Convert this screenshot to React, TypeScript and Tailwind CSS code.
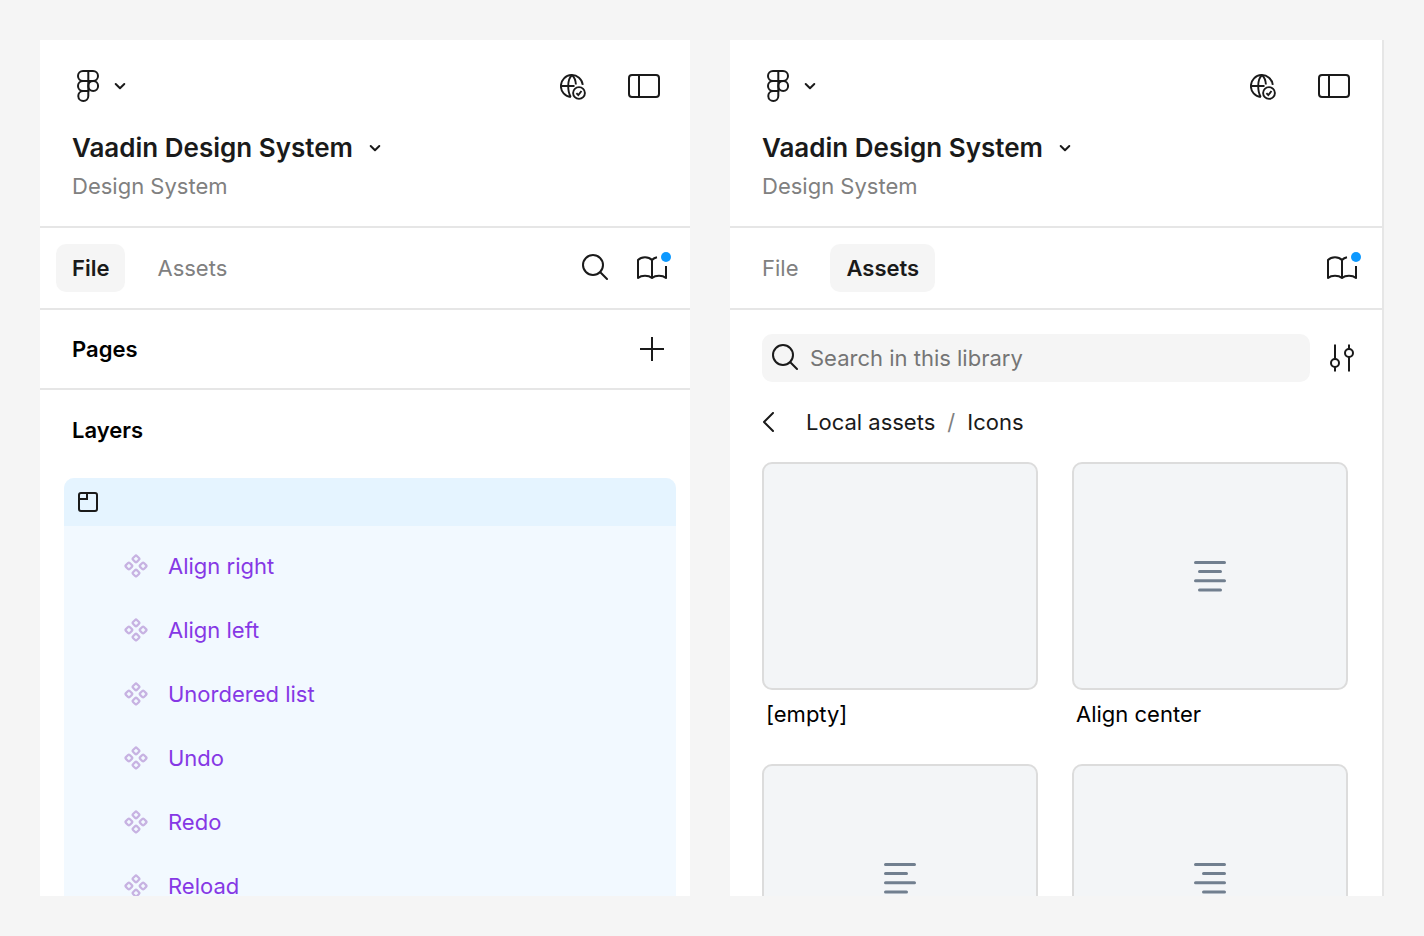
import React, { type ReactNode } from "react";

type IconProps = { className?: string };

function LogoIcon() {
  return (
    <svg width="32" height="32" viewBox="0 0 32 32" fill="none" stroke="currentColor" strokeWidth="2" aria-hidden="true">
      <path d="M16.300 1H11a5 5 0 0 0 0 10h5.300V1zM16.300 1h4.700a5 5 0 0 1 0 10h-4.700" />
      <path d="M16.300 11H11a5 5 0 0 0 0 10h5.300V11z" />
      <circle cx="21.200" cy="16" r="4.900" />
      <path d="M16.300 21H11a5 5 0 1 0 5.300 5V21z" />
    </svg>
  );
}

function ChevronDownIcon() {
  return (
    <svg width="12" height="8" viewBox="0 0 12 8" fill="none" stroke="currentColor" strokeWidth="2" strokeLinecap="round" strokeLinejoin="round" aria-hidden="true">
      <path d="M1.700 2 6 6.200 10.300 2" />
    </svg>
  );
}

function GlobeCheckIcon() {
  return (
    <svg width="28" height="28" viewBox="0 0 28 28" fill="none" stroke="currentColor" strokeWidth="1.900" aria-hidden="true">
      <path d="M22.800 12.800A11 11 0 1 0 10.800 25" />
      <path d="M12 3.200C9.200 5.500 8.200 9.500 8.200 14c0 4.300.6 7.800 2.600 11M12 3.200c2.400 2 3.700 5.500 3.900 9.300M1.200 14h13.300" />
      <circle cx="19" cy="21" r="5.900" />
      <path d="m16.400 21.200 1.900 1.900 3.200-4.100" />
    </svg>
  );
}

function SidebarIcon() {
  return (
    <svg width="32" height="24" viewBox="0 0 32 24" fill="none" stroke="currentColor" strokeWidth="2" aria-hidden="true">
      <rect x="1" y="1" width="30" height="22" rx="3" />
      <path d="M11 1v22" />
    </svg>
  );
}

function SearchIcon() {
  return (
    <svg width="28" height="28" viewBox="0 0 28 28" fill="none" stroke="currentColor" strokeWidth="2" strokeLinecap="round" aria-hidden="true">
      <circle cx="13" cy="11" r="10" />
      <path d="m20.300 18.300 6.700 6.700" />
    </svg>
  );
}

function BookIcon() {
  return (
    <svg width="36" height="32" viewBox="0 0 36 32" fill="none" stroke="currentColor" strokeWidth="2" strokeLinejoin="round" aria-hidden="true">
      <path d="M16 8C12.500 4.200 5.500 4.200 2 8v18c3.500-3 10.500-3 14 0 3.500-3 10.500-3 14 0V14M16 8v18M16 8c1.400-1.500 3.100-2.400 5-2.800" />
      <circle cx="30" cy="5" r="5" fill="#0d99ff" stroke="none" />
    </svg>
  );
}

function PlusIcon() {
  return (
    <svg width="24" height="24" viewBox="0 0 24 24" fill="none" stroke="currentColor" strokeWidth="2" aria-hidden="true">
      <path d="M12 0v24M0 12h24" />
    </svg>
  );
}

function FrameIcon() {
  return (
    <svg width="24" height="24" viewBox="0 0 24 24" fill="none" stroke="currentColor" strokeWidth="2" aria-hidden="true">
      <rect x="3" y="3" width="18" height="18" rx="2" />
      <path d="M3 9h8V3" />
    </svg>
  );
}

function ComponentIcon({ className }: IconProps) {
  return (
    <svg className={className} width="24" height="24" viewBox="0 0 24 24" fill="none" stroke="currentColor" strokeWidth="2.200" aria-hidden="true">
      <rect x="-2.700" y="-2.700" width="5.400" height="5.400" rx="1.200" transform="translate(12 4.900) rotate(45)" />
      <rect x="-2.700" y="-2.700" width="5.400" height="5.400" rx="1.200" transform="translate(19.100 12) rotate(45)" />
      <rect x="-2.700" y="-2.700" width="5.400" height="5.400" rx="1.200" transform="translate(12 19.100) rotate(45)" />
      <rect x="-2.700" y="-2.700" width="5.400" height="5.400" rx="1.200" transform="translate(4.900 12) rotate(45)" />
    </svg>
  );
}

function SlidersIcon() {
  return (
    <svg width="24" height="28" viewBox="0 0 24 28" fill="none" stroke="currentColor" strokeWidth="2" aria-hidden="true">
      <circle cx="5" cy="19" r="4" />
      <circle cx="19" cy="9" r="4" />
      <path d="M5 0.500V15M5 23v4.500M19 0.500V5M19 13v14.500" />
    </svg>
  );
}

function BackIcon() {
  return (
    <svg width="14" height="20" viewBox="0 0 14 20" fill="none" stroke="currentColor" strokeWidth="2" strokeLinecap="round" strokeLinejoin="round" aria-hidden="true">
      <path d="M11 1 2 10l9 9" />
    </svg>
  );
}

const ALIGN_LINES = {
  left: "M1.500 2.500h29M1.500 11.600h21M1.500 20.800h29M1.500 29.900h21",
  center: "M1.500 2.500h29M5.500 11.600h21M1.500 20.800h29M5.500 29.900h21",
  right: "M1.500 2.500h29M9.500 11.600h21M1.500 20.800h29M9.500 29.900h21",
};

function AlignIcon({ side }: { side: keyof typeof ALIGN_LINES }) {
  return (
    <svg className="text-[#717f8f]" width="32" height="32" viewBox="0 0 32 32" fill="none" stroke="currentColor" strokeWidth="3" strokeLinecap="round" aria-hidden="true">
      <path d={ALIGN_LINES[side]} />
    </svg>
  );
}

function IconButton({ label, children }: { label: string; children: ReactNode }) {
  return (
    <button type="button" aria-label={label} className="flex shrink-0 items-center justify-center">
      {children}
    </button>
  );
}

function PanelHeader({ className }: { className: string }) {
  return (
    <header className={`shrink-0 border-b-2 border-[#e6e6e6] pt-7 pb-[22px] pl-8 ${className}`}>
      <div className="flex h-9 items-center">
        <button type="button" aria-label="Main menu" className="flex items-center gap-2.5">
          <LogoIcon />
          <ChevronDownIcon />
        </button>
        <div className="ml-auto flex items-center gap-10">
          <IconButton label="Published library">
            <GlobeCheckIcon />
          </IconButton>
          <IconButton label="Toggle sidebar">
            <SidebarIcon />
          </IconButton>
        </div>
      </div>
      <button type="button" className="mt-6 flex h-10 items-center gap-4">
        <h1 className="text-[26px] leading-10 font-semibold">Vaadin Design System</h1>
        <ChevronDownIcon />
      </button>
      <p className="h-9 text-[22px] leading-9 text-[#808080]">Design System</p>
    </header>
  );
}

function Tabs({ active, className, children }: { active: string; className: string; children: ReactNode }) {
  return (
    <nav className={`flex h-[82px] shrink-0 items-center gap-4 border-b-2 border-[#e6e6e6] pl-4 ${className}`}>
      {["File", "Assets"].map((name) => (
        <button
          key={name}
          type="button"
          aria-pressed={name === active}
          className={`h-12 rounded-[10px] px-4 ${name === active ? "bg-[#f5f5f5] font-semibold" : "text-[#808080]"}`}
        >
          {name}
        </button>
      ))}
      <div className="ml-auto flex items-center gap-7">{children}</div>
    </nav>
  );
}

const LAYERS = ["Align right", "Align left", "Unordered list", "Undo", "Redo", "Reload"];

function FilePanel() {
  return (
    <section className="flex min-h-0 min-w-0 flex-col overflow-hidden bg-white" aria-label="File">
      <PanelHeader className="pr-[30px]" />
      <Tabs active="File" className="pr-[18px]">
        <IconButton label="Search">
          <SearchIcon />
        </IconButton>
        <IconButton label="Libraries">
          <BookIcon />
        </IconButton>
      </Tabs>
      <div className="flex h-20 shrink-0 items-center justify-between border-b-2 border-[#e6e6e6] pr-[26px] pl-8">
        <h2 className="font-semibold text-black">Pages</h2>
        <IconButton label="Add page">
          <PlusIcon />
        </IconButton>
      </div>
      <h2 className="flex h-20 shrink-0 items-center pl-8 font-semibold text-black">Layers</h2>
      <div className="mt-2 mr-3.5 ml-6 shrink-0 overflow-hidden rounded-t-[10px] bg-[#f2f9ff]">
        <div className="flex h-12 items-center bg-[#e5f4ff] px-3">
          <FrameIcon />
        </div>
        <ul className="pt-2">
          {LAYERS.map((name) => (
            <li key={name} className="flex h-16 items-center gap-5 pl-[60px] text-[#8638e5]">
              <ComponentIcon className="text-[#c7b2e2]" />
              {name}
            </li>
          ))}
        </ul>
      </div>
    </section>
  );
}

const ASSETS: { name: string; side?: keyof typeof ALIGN_LINES }[] = [
  { name: "[empty]" },
  { name: "Align center", side: "center" },
  { name: "Align left", side: "left" },
  { name: "Align right", side: "right" },
];

function AssetsPanel() {
  return (
    <section className="flex min-h-0 min-w-0 flex-col overflow-hidden border-r-2 border-[#e6e6e6] bg-white" aria-label="Assets">
      <PanelHeader className="pr-8" />
      <Tabs active="Assets" className="pr-5">
        <IconButton label="Libraries">
          <BookIcon />
        </IconButton>
      </Tabs>
      <div className="flex shrink-0 items-center gap-5 pt-6 pr-7 pl-8">
        <label className="flex h-12 flex-1 items-center gap-3 rounded-[10px] bg-[#f5f5f5] px-2">
          <SearchIcon />
          <input
            type="search"
            aria-label="Search in this library"
            placeholder="Search in this library"
            className="min-w-0 flex-1 bg-transparent outline-none placeholder:text-[#757575]"
          />
        </label>
        <IconButton label="Filter">
          <SlidersIcon />
        </IconButton>
      </div>
      <nav className="flex h-20 shrink-0 items-center pl-8" aria-label="Breadcrumb">
        <IconButton label="Back">
          <BackIcon />
        </IconButton>
        <a href="#local-assets" className="ml-[30px]">Local assets</a>
        <span className="mx-3 text-[#808080]">/</span>
        <span>Icons</span>
      </nav>
      <ul className="grid shrink-0 grid-cols-2 gap-x-[34px] gap-y-[26px] pr-[34px] pl-8">
        {ASSETS.map(({ name, side }) => (
          <li key={name}>
            <div className="flex h-[228px] items-center justify-center rounded-[10px] border-2 border-[#dcdcdc] bg-[#f3f5f7]">
              {side && <AlignIcon side={side} />}
            </div>
            <p className="h-12 px-1 leading-[48px] text-black">{name}</p>
          </li>
        ))}
      </ul>
    </section>
  );
}

export default function App() {
  return (
    <main className="grid h-screen grid-cols-[325fr_327fr] grid-rows-[minmax(0,1fr)] gap-10 bg-[#f5f5f5] p-10 font-['Inter',sans-serif] text-[22px] text-[#1a1a1a]">
      <FilePanel />
      <AssetsPanel />
    </main>
  );
}
